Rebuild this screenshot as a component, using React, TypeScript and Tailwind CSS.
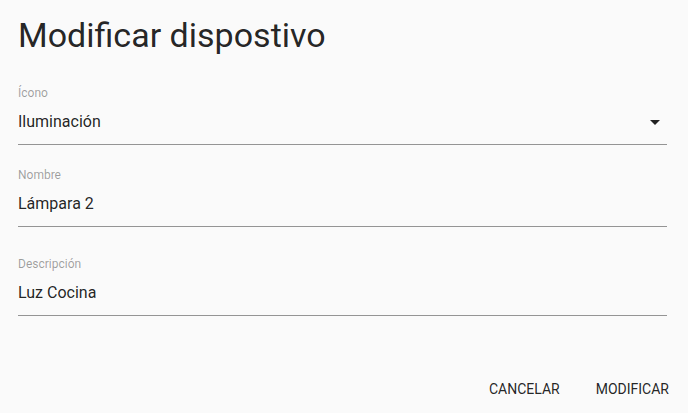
export default function App() {
  const fields = [
    { label: "Ícono", value: "Iluminación", select: true, mt: "mt-[31px]" },
    { label: "Nombre", value: "Lámpara 2", select: false, mt: "mt-[23px]" },
    { label: "Descripción", value: "Luz Cocina", select: false, mt: "mt-[30px]" },
  ];

  return (
    <div className="w-[688px] h-[413px] bg-[#fafafa] font-['Roboto',sans-serif] flex flex-col overflow-hidden">
      <div className="px-[18px] pt-[15px] flex flex-col">
        <h1 className="text-[34px] leading-[40px] text-[rgba(0,0,0,0.87)] font-normal">Modificar dispostivo</h1>

        {fields.map((f, i) => (
          <div key={i} className={`${f.mt} w-[649px] flex flex-col`}>
            <label className="text-[12px] leading-[14px] text-[rgba(0,0,0,0.38)]">{f.label}</label>
            <div className="mt-[12px] h-[33px] flex items-start justify-between border-b border-[#949494]">
              <span className="text-[16px] leading-[19px] text-[rgba(0,0,0,0.87)]">{f.value}</span>
              {f.select && (
                <svg width="10" height="5" viewBox="0 0 10 5" className="mt-[8px] mr-[7px]">
                  <path d="M0 0h10L5 5z" fill="rgba(0,0,0,0.87)" />
                </svg>
              )}
            </div>
          </div>
        ))}
      </div>

      <div className="mt-auto flex justify-end gap-[4px] pr-[3px] pb-[6px]">
        <button className="h-[36px] px-[16px] min-w-[64px] text-[14px] uppercase text-[rgba(0,0,0,0.87)]">Cancelar</button>
        <button className="h-[36px] px-[16px] min-w-[64px] text-[14px] uppercase text-[rgba(0,0,0,0.87)]">Modificar</button>
      </div>
    </div>
  );
}
